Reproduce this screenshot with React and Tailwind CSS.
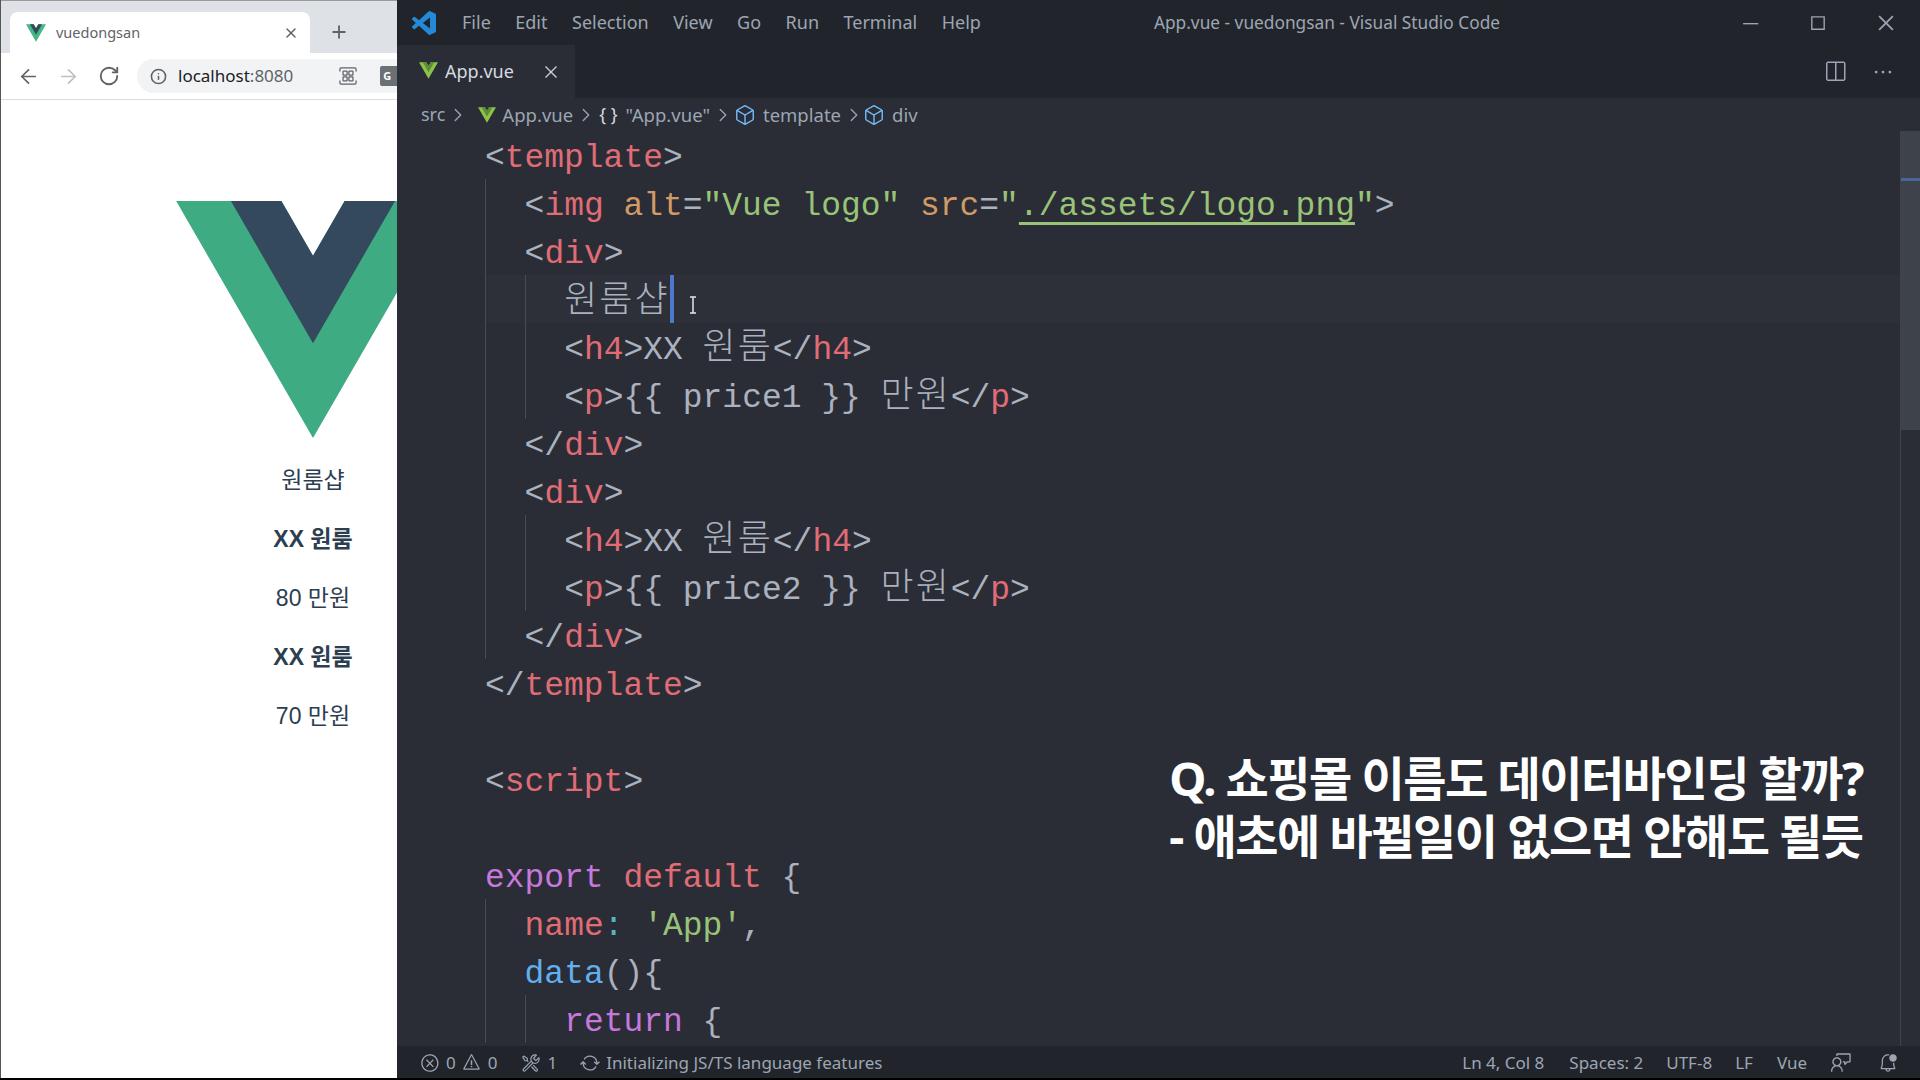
import { ArrowLeft, ArrowRight, RotateCw, Info, X, Plus, Box, ChevronRight } from 'lucide-react';
import { VscError, VscWarning, VscTools, VscSync, VscFeedback, VscBellDot, VscSplitHorizontal, VscEllipsis, VscChromeMinimize, VscChromeMaximize, VscChromeClose, VscClose } from 'react-icons/vsc';

const uiFont = "font-['Noto_Sans','Noto_Sans_CJK_KR',sans-serif]";

function VueMark({ className, outer = '#41b883', inner = '#34495e' }) {
  return (
    <svg viewBox="0 0 261.76 226.69" className={className}>
      <path fill={outer} d="M161.096.001l-30.225 52.351L100.647.001H-.005l130.877 226.688L261.749.001z" />
      <path fill={inner} d="M161.096.001l-30.225 52.351L100.647.001H52.346l78.526 136.01L209.398.001z" />
    </svg>
  );
}

function VsCodeLogo() {
  return (
    <svg viewBox="0 0 24 24" className="w-[24px] h-[24px] ml-[15px] shrink-0" fill="#2489d6">
      <path d="M23.15 2.587L18.21.21a1.494 1.494 0 0 0-1.705.29l-9.46 8.63-4.12-3.128a.999.999 0 0 0-1.276.057L.327 7.261A1 1 0 0 0 .326 8.74L3.899 12 .326 15.26a1 1 0 0 0 .001 1.479L1.65 17.94a.999.999 0 0 0 1.276.057l4.12-3.128 9.46 8.63a1.492 1.492 0 0 0 1.704.29l4.942-2.377A1.5 1.5 0 0 0 24 20.06V3.939a1.5 1.5 0 0 0-.85-1.352zm-5.146 14.861L10.826 12l7.178-5.448v10.896z" />
    </svg>
  );
}

function BrowserPane() {
  return (
    <div className={`w-[397px] shrink-0 h-full bg-white flex flex-col overflow-hidden border-l border-[#555] ${uiFont}`}>
      <div className="h-[53px] shrink-0 bg-[#dee1e6] border-t border-[#9a9a9a] flex items-end pl-[9px]">
        <div className="w-[300px] h-[41px] bg-white rounded-t-lg flex items-center pl-[16px] pr-[11px]">
          <VueMark className="w-[20px] h-[18px] shrink-0" />
          <span className="ml-[10px] text-[14.5px] text-[#5f6368]">vuedongsan</span>
          <X className="ml-auto w-[16px] h-[16px] text-[#5f6368]" strokeWidth={2.2} />
        </div>
        <Plus className="ml-[19px] mb-[11px] w-[20px] h-[20px] text-[#5f6368]" strokeWidth={2.2} />
      </div>
      <div className="h-[47px] shrink-0 border-b border-[#dadce0] flex items-center pl-[16px]">
        <ArrowLeft className="w-[23px] h-[23px] shrink-0 text-[#5f6368]" strokeWidth={1.8} />
        <ArrowRight className="ml-[17px] w-[23px] h-[23px] shrink-0 text-[#bdc1c6]" strokeWidth={1.8} />
        <RotateCw className="ml-[18px] w-[22px] h-[22px] shrink-0 text-[#5f6368]" strokeWidth={2} />
        <div className="ml-[17px] w-[270px] h-[34px] shrink-0 bg-[#f1f3f4] rounded-l-full flex items-center pl-[13px]">
          <Info className="w-[17px] h-[17px] shrink-0 text-[#5f6368]" strokeWidth={2.2} />
          <span className="ml-[11px] text-[17px] text-[#202124]">localhost<span className="text-[#5f6368]">:8080</span></span>
          <svg viewBox="0 0 20 20" className="ml-[46px] w-[18px] h-[18px] shrink-0" fill="none" stroke="#5f6368" strokeWidth="1.4">
            <path d="M1 5V2.5A1.5 1.5 0 0 1 2.5 1h15A1.5 1.5 0 0 1 19 2.5V5M1 15v2.5A1.5 1.5 0 0 0 2.5 19h15a1.5 1.5 0 0 0 1.5-1.5V15" />
            <rect x="4.5" y="4.5" width="4.5" height="4.5" rx="0.5" />
            <rect x="11" y="4.5" width="4.5" height="4.5" rx="0.5" />
            <rect x="4.5" y="11" width="4.5" height="4.5" rx="0.5" />
            <rect x="11" y="11" width="4.5" height="4.5" rx="0.5" />
          </svg>
          <div className="ml-[23px] w-[22px] h-[20px] shrink-0 bg-[#6b7074] rounded-[2px] flex items-center pl-[3px] text-[11px] font-bold text-white">G</div>
        </div>
      </div>
      <div className="flex-1 w-[624px] flex flex-col items-center pt-[101px] text-[23px] text-[#2c3e50] leading-[59px] font-['Liberation_Sans','Noto_Sans_CJK_KR',sans-serif]">
        <VueMark className="w-[274px] h-[237px] shrink-0" outer="#3eab83" />
        <p className="mt-[13px]">원룸샵</p>
        <p className="font-bold">XX 원룸</p>
        <p>80 만원</p>
        <p className="font-bold">XX 원룸</p>
        <p>70 만원</p>
      </div>
    </div>
  );
}

function Ko({ children }) {
  return <span className="font-['Noto_Sans_CJK_KR',sans-serif] text-[36px] tracking-[2px] font-light leading-none text-[#abb2bf]">{children}</span>;
}
function Tag({ children }) {
  return <span className="text-[#e06c75]">{children}</span>;
}
function Attr({ children }) {
  return <span className="text-[#d19a66]">{children}</span>;
}
function Str({ children }) {
  return <span className="text-[#98c379]">{children}</span>;
}
function Kw({ children }) {
  return <span className="text-[#c678dd]">{children}</span>;
}

function Line({ indent = 0, active = false, children }) {
  const cells = Array.from({ length: indent });
  return (
    <div className="h-12 shrink-0 flex">
      <div className="w-[88px] shrink-0" />
      <div className={`flex-1 flex items-center whitespace-pre ${active ? 'bg-[#2d3039]' : ''}`}>
        {cells.map((_, i) => (
          <span key={i} className="w-[39.6px] h-12 shrink-0 border-l border-[#474b54]" />
        ))}
        <span className={`flex items-center ${active ? '' : 'pt-[7px]'}`}>{children}</span>
      </div>
    </div>
  );
}

function CodeEditor() {
  return (
    <div className="flex-1 min-h-0 flex relative bg-[#2a2d35] overflow-hidden">
      <div className="flex-1 min-w-0 flex flex-col overflow-hidden text-[32.95px] text-[#abb2bf] font-['Liberation_Mono','Noto_Sans_CJK_KR',monospace]">
        <Line><span>&lt;<Tag>template</Tag>&gt;</span></Line>
        <Line indent={1}>
          <span>
            &lt;<Tag>img</Tag> <Attr>alt</Attr>=<Str>"Vue logo"</Str> <Attr>src</Attr>=<Str>"<span className="underline decoration-[3px] underline-offset-[7px]">./assets/logo.png</span>"</Str>&gt;
          </span>
        </Line>
        <Line indent={1}><span>&lt;<Tag>div</Tag>&gt;</span></Line>
        <Line indent={2} active>
          <span className="pt-[8px]"><Ko>원룸샵</Ko></span>
          <span className="w-[4px] h-12 bg-[#4d78cc] shrink-0" />
          <svg viewBox="0 0 10 18" className="w-[10px] h-[18px] ml-[14px] mt-[12px] shrink-0" fill="none" strokeWidth="1.5">
            <path d="M2 1h6M5 1v16M2 17h6" stroke="#e5e5e5" />
          </svg>
        </Line>
        <Line indent={2}><span>&lt;<Tag>h4</Tag>&gt;XX <Ko>원룸</Ko>&lt;/<Tag>h4</Tag>&gt;</span></Line>
        <Line indent={2}><span>&lt;<Tag>p</Tag>&gt;{'{{ price1 }}'} <Ko>만원</Ko>&lt;/<Tag>p</Tag>&gt;</span></Line>
        <Line indent={1}><span>&lt;/<Tag>div</Tag>&gt;</span></Line>
        <Line indent={1}><span>&lt;<Tag>div</Tag>&gt;</span></Line>
        <Line indent={2}><span>&lt;<Tag>h4</Tag>&gt;XX <Ko>원룸</Ko>&lt;/<Tag>h4</Tag>&gt;</span></Line>
        <Line indent={2}><span>&lt;<Tag>p</Tag>&gt;{'{{ price2 }}'} <Ko>만원</Ko>&lt;/<Tag>p</Tag>&gt;</span></Line>
        <Line indent={1}><span>&lt;/<Tag>div</Tag>&gt;</span></Line>
        <Line><span>&lt;/<Tag>template</Tag>&gt;</span></Line>
        <Line />
        <Line><span>&lt;<Tag>script</Tag>&gt;</span></Line>
        <Line />
        <Line><span><Kw>export</Kw> <Tag>default</Tag> {'{'}</span></Line>
        <Line indent={1}><span><Tag>name</Tag><span className="text-[#56b6c2]">:</span> <Str>'App'</Str>,</span></Line>
        <Line indent={1}><span><span className="text-[#61afef]">data</span>(){'{'}</span></Line>
        <Line indent={2}><span><Kw>return</Kw> {'{'}</span></Line>
      </div>
      <div className="w-5 shrink-0 border-l border-[#3f434c]">
        <div className="h-[299px] bg-[#3d424b] pt-[47px]">
          <div className="h-[3px] bg-[#4a6598]" />
        </div>
      </div>
      <div className={`absolute right-[57px] top-[618px] text-white font-bold text-[47px] leading-[58px] tracking-[-1.5px] whitespace-pre ${uiFont}`}>
        <p>Q. 쇼핑몰 이름도 데이터바인딩 할까?</p>
        <p>- 애초에 바뀔일이 없으면 안해도 될듯</p>
      </div>
    </div>
  );
}

function Sep() {
  return <ChevronRight className="w-[22px] h-[22px] mx-[2px] shrink-0 text-[#9da5b4]" strokeWidth={1.4} />;
}

function VsCodePane() {
  return (
    <div className={`flex-1 min-w-0 h-full flex flex-col text-[18px] text-[#9da5b4] ${uiFont}`}>
      <div className="h-[45px] shrink-0 bg-[#21252b] flex items-center">
        <VsCodeLogo />
        <nav className="ml-[26px] flex gap-[24.5px]">
          <span>File</span><span>Edit</span><span>Selection</span><span>View</span><span>Go</span><span>Run</span><span>Terminal</span><span>Help</span>
        </nav>
        <span className="ml-[173px] text-[17.3px]">App.vue - vuedongsan - Visual Studio Code</span>
        <div className="ml-auto flex items-center gap-[46px] pr-[23px]">
          <VscChromeMinimize className="w-[22px] h-[22px]" />
          <VscChromeMaximize className="w-[22px] h-[22px]" />
          <VscChromeClose className="w-[22px] h-[22px]" />
        </div>
      </div>
      <div className="h-[53px] shrink-0 bg-[#21252b] flex">
        <div className="w-[178px] bg-[#2a2d35] flex items-center pl-[22px]">
          <VueMark className="w-[19px] h-[17px] shrink-0 -mt-[2px]" outer="#8bc34a" inner="#5f8a36" />
          <span className="ml-[7px] text-[#d7dae0]">App.vue</span>
          <VscClose className="ml-[26px] w-[22px] h-[22px] text-[#c8ccd4]" />
        </div>
        <div className="ml-auto flex items-center gap-[25px] pr-[26px]">
          <VscSplitHorizontal className="w-[24px] h-[24px]" />
          <VscEllipsis className="w-[22px] h-[22px]" />
        </div>
      </div>
      <div className="h-[33px] shrink-0 bg-[#2a2d35] flex items-center pl-[24px]">
        <span>src</span>
        <Sep />
        <VueMark className="ml-[7px] w-[18px] h-[16px] shrink-0" outer="#8bc34a" inner="#5f8a36" />
        <span className="ml-[6px] text-[18.5px]">App.vue</span>
        <Sep />
        <span className="text-[#d7dae0]">{'{ }'}</span>
        <span className="ml-[8px] text-[18.5px]">"App.vue"</span>
        <Sep />
        <Box className="-ml-[2px] w-[22px] h-[22px] text-[#75beff] shrink-0" strokeWidth={1.5} />
        <span className="ml-[7px] text-[18.5px]">template</span>
        <Sep />
        <Box className="-ml-[4px] w-[22px] h-[22px] text-[#75beff] shrink-0" strokeWidth={1.5} />
        <span className="ml-[7px] text-[18.5px]">div</span>
      </div>
      <CodeEditor />
      <div className="h-[32px] shrink-0 bg-[#21252b] flex items-center text-[17px] pt-[1px]">
        <VscError className="ml-[23px] w-[20px] h-[20px]" />
        <span className="ml-[6px]">0</span>
        <VscWarning className="ml-[6px] w-[19px] h-[19px]" />
        <span className="ml-[7px]">0</span>
        <VscTools className="ml-[24px] w-[20px] h-[20px]" />
        <span className="ml-[6px]">1</span>
        <VscSync className="ml-[23px] w-[20px] h-[20px]" />
        <span className="ml-[6px]">Initializing JS/TS language features</span>
        <div className="ml-auto flex items-center pr-[22px]">
          <span>Ln 4, Col 8</span>
          <span className="ml-[25px]">Spaces: 2</span>
          <span className="ml-[23px]">UTF-8</span>
          <span className="ml-[23px]">LF</span>
          <span className="ml-[24px]">Vue</span>
          <VscFeedback className="ml-[24px] w-[21px] h-[21px]" />
          <VscBellDot className="ml-[26px] w-[20px] h-[20px]" />
        </div>
      </div>
    </div>
  );
}

export default function App() {
  return (
    <div className="w-[1920px] h-[1080px] bg-black overflow-hidden">
      <div className="h-[1078px] flex">
        <BrowserPane />
        <VsCodePane />
      </div>
    </div>
  );
}
